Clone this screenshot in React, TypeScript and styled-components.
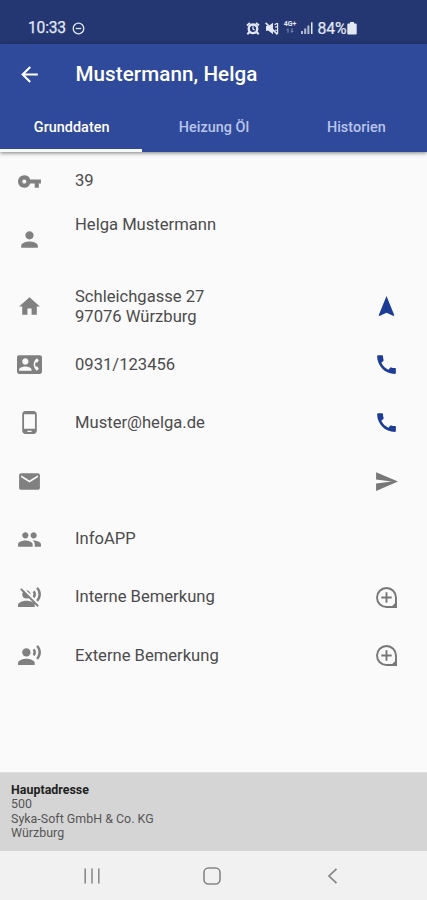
import React from 'react';
import styled, { createGlobalStyle } from 'styled-components';
import {
  MdArrowBack,
  MdCall,
  MdContactPhone,
  MdEmail,
  MdHome,
  MdNavigation,
  MdPeople,
  MdPerson,
  MdPhoneAndroid,
  MdRecordVoiceOver,
  MdSend,
  MdVoiceOverOff,
  MdVpnKey,
} from 'react-icons/md';

const GlobalStyle = createGlobalStyle`
  * { box-sizing: border-box; }
  body {
    margin: 0;
    background: #fafafa;
    font-family: Roboto, 'Liberation Sans', sans-serif;
  }
  svg { display: block; flex: none; }
`;

const Screen = styled.div`
  display: flex;
  flex-direction: column;
  width: 427px;
  height: 900px;
  overflow: hidden;
  background: #fafafa;
`;

const StatusBar = styled.div`
  display: flex;
  align-items: center;
  flex: none;
  height: 44px;
  padding: 12px 70px 0 28px;
  background: #243772;
  color: #e3e8f6;
`;

const Clock = styled.span`
  width: 44px;
  font-size: 15.6px;
  letter-spacing: -0.2px;
  -webkit-text-stroke: 0.25px currentColor;
`;

const StatusIcons = styled.div`
  display: flex;
  align-items: center;
  gap: 4.5px;
  margin-left: auto;
`;

const Battery = styled.div`
  display: flex;
  align-items: center;
  gap: 0.5px;
  font-size: 15.8px;
  letter-spacing: -0.1px;
  -webkit-text-stroke: 0.2px currentColor;
`;

const Header = styled.header`
  display: flex;
  flex-direction: column;
  flex: none;
  height: 108px;
  background: #2f4a9b;
  box-shadow: 0 1px 4px rgba(0, 0, 0, 0.5);
  color: #fff;
  z-index: 1;
`;

const TitleBar = styled.div`
  display: flex;
  align-items: center;
  height: 58px;
  padding: 2px 17px 0;
`;

const Title = styled.h1`
  margin: 0 0 0 33.5px;
  font-size: 20.6px;
  font-weight: 500;
  letter-spacing: 0.08px;
`;

const Tabs = styled.nav`
  display: grid;
  grid-template-columns: repeat(3, 1fr);
  flex: 1;
`;

const Tab = styled.div<{ $active?: boolean }>`
  display: flex;
  align-items: center;
  justify-content: center;
  padding-top: ${({ $active }) => ($active ? '3px' : '0')};
  padding-left: 1px;
  border-bottom: ${({ $active }) => ($active ? '3px solid #f7f8fc' : '0')};
  font-size: 14.4px;
  font-weight: 500;
  letter-spacing: 0.03px;
  color: ${({ $active }) => ($active ? '#fff' : '#b9c5ea')};
`;

const List = styled.main`
  display: flex;
  flex-direction: column;
  flex: 1;
`;

const Row = styled.div<{ $tall?: boolean }>`
  display: grid;
  grid-template-columns: 58px 1fr 25px;
  align-items: center;
  height: 58.1px;
  padding: 0 28.5px 0 17px;
  margin-bottom: ${({ $tall }) => ($tall ? '9.5px' : '0')};
  color: #808080;
`;

const RowText = styled.div<{ $raised?: boolean }>`
  padding-bottom: ${({ $raised }) => ($raised ? '29px' : '0')};
  font-size: 16.6px;
  line-height: 19.5px;
  white-space: pre-line;
  color: #4c4c4c;
`;

const Action = styled.div<{ $primary?: boolean }>`
  color: ${({ $primary }) => ($primary ? '#1d3c96' : '#777')};
`;

const Footer = styled.footer`
  flex: none;
  height: 79px;
  padding: 10px 11px 0;
  background: #d5d5d5;
  border-top: 1px solid #dedede;
  font-size: 12.4px;
  line-height: 14.4px;
  letter-spacing: 0.03px;
  color: #555;
`;

const FooterTitle = styled.div`
  font-weight: 700;
  color: #222;
`;

const NavBar = styled.div`
  display: grid;
  grid-template-columns: repeat(3, 120px);
  justify-items: center;
  align-items: center;
  flex: none;
  height: 49px;
  padding: 1px 0 0 32px;
  background: #f1f1f1;
  color: #858585;
`;

const ICON = 25;

const DoNotDisturb = () => (
  <svg width="13" height="13" viewBox="0 0 13 13" fill="none" stroke="currentColor" strokeWidth="1.3">
    <circle cx="6.5" cy="6.5" r="5.3" />
    <path d="M3.7 6.5h5.6" />
  </svg>
);

const Alarm = () => (
  <svg width="14" height="13" viewBox="0 0 14 13" fill="none" stroke="currentColor">
    <circle cx="7" cy="6.8" r="4.3" strokeWidth="2.3" />
    <path d="M1 3.5 4 .9M13 3.5 10 .9M3.500 10 1.300 12.300M10.500 10l2.200 2.300" strokeWidth="2" />
    <path d="M7 4.300v2.800l1.600.8" strokeWidth="1.200" />
  </svg>
);

const Muted = () => (
  <svg width="14" height="13" viewBox="0 0 14 13" fill="none" stroke="currentColor">
    <path d="M1 4h2.500L8 .8v11.400L3.500 8.800H1z" fill="currentColor" stroke="none" />
    <path d="M.6.8 12.500 12.300" strokeWidth="1.700" />
    <path d="M9.500 2.600l3-1.300M10 5.200l2.600-.5M10 8l2.600.5M12.600 1v11" strokeWidth="1.200" />
  </svg>
);

const NetworkWrap = styled.div`
  display: flex;
  flex-direction: column;
  align-items: center;
  width: 13px;
  margin-top: -2px;
  font-size: 7px;
  line-height: 7px;
  font-weight: 700;
`;

const Network = () => (
  <NetworkWrap>
    <span>4G+</span>
    <svg width="8" height="5" viewBox="0 0 8 5" stroke="currentColor" fill="none" opacity=".5">
      <path d="M2 4.8V.7M.7 2 2 .7M6 .2v4.1M4.7 3 6 4.3 7.3 3" />
    </svg>
  </NetworkWrap>
);

const Signal = () => (
  <svg width="12" height="12" viewBox="0 0 12 12" fill="currentColor">
    <path d="M0 9h2v3H0zM3.2 6.5h2V12h-2zM6.4 3.6h2V12h-2z" opacity=".75" />
    <path d="M10 .3h1.5V12H10z" />
  </svg>
);

const BatteryIcon = () => (
  <svg width="10" height="13" viewBox="0 0 10 13" fill="currentColor">
    <path d="M3 0h4v1.6h1.500c.8 0 1.200.4 1.200 1.100v8.800c0 .7-.4 1.100-1.200 1.100h-7C.7 12.600.3 12.200.3 11.500V2.700c0-.7.4-1.100 1.200-1.100H3z" />
  </svg>
);

const AddNote = () => (
  <svg width={ICON} height={ICON} viewBox="0 0 25 25" fill="none" stroke="currentColor">
    <path d="M22 12.500A9.500 9.500 0 1 0 12.500 22H22z" strokeWidth="1.900" />
    <path d="M22.500 15v7.500H15c3.500-.8 6.200-3.700 7.500-7.500z" fill="currentColor" stroke="none" />
    <path d="M12.500 7.300v10.400M7.300 12.500h10.400" strokeWidth="1.900" />
  </svg>
);

const RecentsIcon = () => (
  <svg width="18" height="18" viewBox="0 0 18 18" stroke="currentColor" strokeWidth="1.5">
    <path d="M2.200 1.500v15M9 1.500v15M15.800 1.500v15" />
  </svg>
);

const HomeButtonIcon = () => (
  <svg width="18" height="18" viewBox="0 0 18 18" fill="none" stroke="currentColor" strokeWidth="1.6">
    <rect x="1" y="1" width="16" height="16" rx="4.5" />
  </svg>
);

const BackIcon = () => (
  <svg width="11" height="18" viewBox="0 0 11 18" fill="none" stroke="currentColor" strokeWidth="1.7">
    <path d="M9.500 1.800 2 9l7.500 7.200" />
  </svg>
);

type Entry = {
  icon: React.ReactNode;
  text: string;
  raised?: boolean;
  action?: React.ReactNode;
  primary?: boolean;
};

const entries: Entry[] = [
  { icon: <MdVpnKey size={ICON} />, text: '39' },
  { icon: <MdPerson size={ICON} />, text: 'Helga Mustermann', raised: true },
  { icon: <MdHome size={ICON} />, text: 'Schleichgasse 27\n97076 Würzburg', action: <MdNavigation size={ICON} />, primary: true },
  { icon: <MdContactPhone size={ICON} />, text: '0931/123456', action: <MdCall size={ICON} />, primary: true },
  { icon: <MdPhoneAndroid size={ICON} />, text: 'Muster@helga.de', action: <MdCall size={ICON} />, primary: true },
  { icon: <MdEmail size={ICON} />, text: '', action: <MdSend size={ICON} /> },
  { icon: <MdPeople size={ICON} />, text: 'InfoAPP' },
  { icon: <MdVoiceOverOff size={ICON} />, text: 'Interne Bemerkung', action: <AddNote /> },
  { icon: <MdRecordVoiceOver size={ICON} />, text: 'Externe Bemerkung', action: <AddNote /> },
];

export default function App() {
  return (
    <Screen>
      <GlobalStyle />
      <StatusBar>
        <Clock>10:33</Clock>
        <DoNotDisturb />
        <StatusIcons>
          <Alarm />
          <Muted />
          <Network />
          <Signal />
          <Battery>
            84%
            <BatteryIcon />
          </Battery>
        </StatusIcons>
      </StatusBar>
      <Header>
        <TitleBar>
          <MdArrowBack size={ICON} />
          <Title>Mustermann, Helga</Title>
        </TitleBar>
        <Tabs>
          <Tab $active>Grunddaten</Tab>
          <Tab>Heizung Öl</Tab>
          <Tab>Historien</Tab>
        </Tabs>
      </Header>
      <List>
        {entries.map((entry, index) => (
          <Row key={index} $tall={entry.raised}>
            {entry.icon}
            <RowText $raised={entry.raised}>{entry.text}</RowText>
            <Action $primary={entry.primary}>{entry.action}</Action>
          </Row>
        ))}
      </List>
      <Footer>
        <FooterTitle>Hauptadresse</FooterTitle>
        <div>500</div>
        <div>Syka-Soft GmbH &amp; Co. KG</div>
        <div>Würzburg</div>
      </Footer>
      <NavBar>
        <RecentsIcon />
        <HomeButtonIcon />
        <BackIcon />
      </NavBar>
    </Screen>
  );
}
